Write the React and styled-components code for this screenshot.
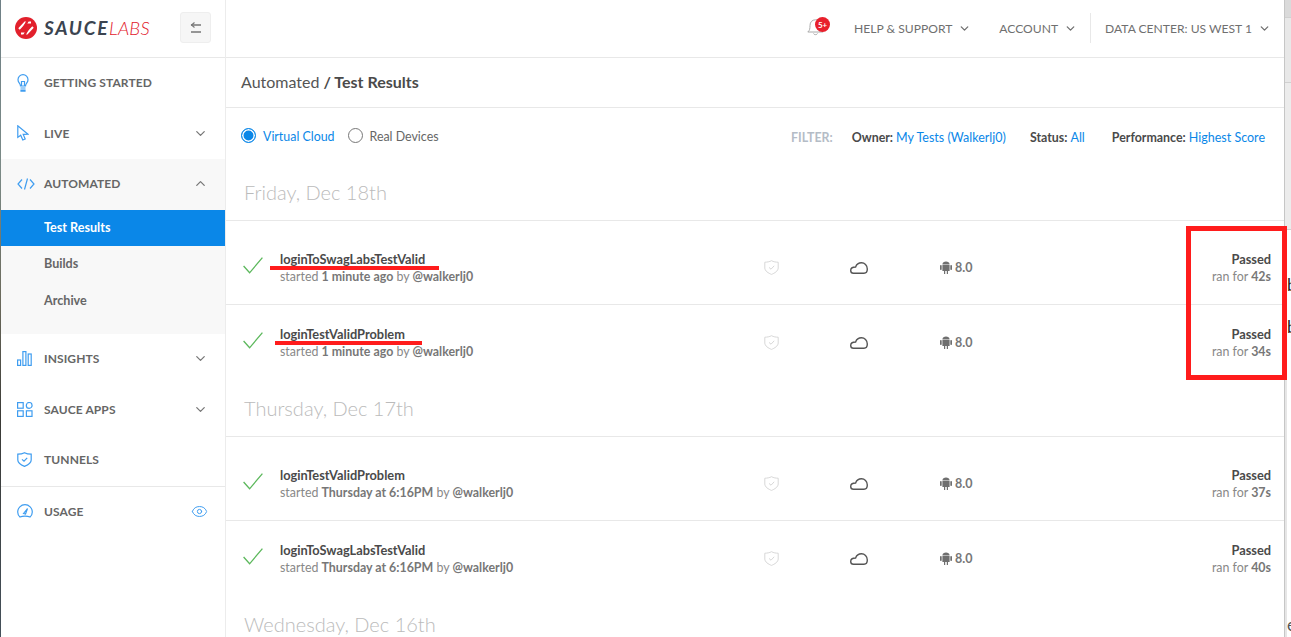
import React from 'react';
import styled, { createGlobalStyle } from 'styled-components';
import { ChevronDown, ChevronUp, Eye } from 'lucide-react';

const GlobalStyle = createGlobalStyle`
    html, body {
        margin: 0;
        padding: 0;
        background: #fff;
        overflow: hidden;
    }
    * {
        box-sizing: border-box;
    }
`;

const Page = styled.div`
    display: flex;
    width: 1291px;
    height: 637px;
    overflow: hidden;
    position: relative;
    font-family: Lato, 'Open Sans', sans-serif;
    color: #666;
`;

const LeftEdge = styled.div`
    width: 1px;
    flex: none;
    background: linear-gradient(#6f8086 0, #7b8a86 170px, #6b6a5c 300px, #3a3a36 420px, #44505a 637px);
`;

const Sidebar = styled.aside`
    width: 225px;
    flex: none;
    border-right: 1px solid #ececec;
    background: #fff;
`;

const LogoBar = styled.div`
    height: 58px;
    display: flex;
    align-items: center;
    justify-content: space-between;
    padding: 0 14px 2px 14px;
    border-bottom: 1px solid #e8e8e8;
`;

const Logo = styled.div`
    display: flex;
    align-items: center;
    gap: 7px;
    font-size: 19px;
    font-style: italic;
`;

const LogoStrong = styled.span`
    font-weight: 700;
    letter-spacing: 1.7px;
    color: #3b4450;
`;

const LogoLight = styled.span`
    font-weight: 300;
    font-size: 18.5px;
    letter-spacing: 0.2px;
    color: #e2202c;
    margin-left: -7px;
`;

const ToggleButton = styled.button`
    width: 31px;
    height: 31px;
    padding: 0;
    display: flex;
    align-items: center;
    justify-content: center;
    background: #f6f6f6;
    border: 1px solid #eeeeee;
    border-radius: 3px;
`;

const NavItem = styled.div`
    height: 50.5px;
    display: flex;
    align-items: center;
    padding: 0 17px 1px 16px;
    font-size: 12px;
    font-weight: 700;
    letter-spacing: 0.1px;
    color: #666;
`;

const NavIcon = styled.span`
    width: 27px;
    flex: none;
    display: flex;
    color: #3f9df0;
`;

const NavLabel = styled.span`
    flex: 1;
`;

const SubPanel = styled.div`
    background: #f8f8f8;
    height: 175px;
`;

const SubItem = styled.div`
    height: 36.5px;
    display: flex;
    align-items: center;
    padding: 0 0 1px 43px;
    font-size: 12.6px;
    font-weight: 700;
    color: ${p => (p.$active ? '#fff' : '#666')};
    background: ${p => (p.$active ? '#0a87e8' : 'transparent')};
`;

const SideDivider = styled.div`
    height: 1px;
    background: #e8e8e8;
`;

const Main = styled.main`
    flex: 1;
    min-width: 0;
    background: #fff;
`;

const TopBar = styled.div`
    height: 58px;
    display: flex;
    align-items: center;
    justify-content: flex-end;
    padding: 0 13px 1px 0;
    border-bottom: 1px solid #e8e8e8;
`;

const Bell = styled.div`
    position: relative;
    width: 22px;
    height: 22px;
    margin-right: 25px;
    color: #aaa;
`;

const BellBadge = styled.span`
    position: absolute;
    top: 0;
    left: 8px;
    width: 15px;
    height: 15px;
    border-radius: 50%;
    background: #e8202c;
    color: #fff;
    font-size: 8px;
    font-weight: 700;
    display: flex;
    align-items: center;
    justify-content: center;
`;

const TopLink = styled.div`
    display: flex;
    align-items: center;
    gap: 6px;
    font-size: 12.1px;
    color: #6f6f6f;
    margin-right: ${p => p.$gap || 0}px;
`;

const TopDivider = styled.div`
    width: 1px;
    height: 30px;
    background: #e8e8e8;
    margin-right: 14px;
`;

const Breadcrumb = styled.div`
    height: 50px;
    display: flex;
    align-items: center;
    gap: 4px;
    padding: 0 0 2px 15px;
    font-size: 16px;
    color: #555;
    border-bottom: 1px solid #e8e8e8;
`;

const BreadcrumbStrong = styled.strong`
    font-weight: 700;
    color: #4a4a4a;
`;

const Toolbar = styled.div`
    height: 56px;
    display: flex;
    align-items: center;
    justify-content: space-between;
    padding: 0 19px 1px 15px;
`;

const RadioGroup = styled.div`
    display: flex;
    align-items: center;
    gap: 13px;
`;

const Radio = styled.label`
    display: flex;
    align-items: center;
    gap: 7px;
    font-size: 12.4px;
    color: ${p => (p.$on ? '#0a87e8' : '#666')};
`;

const RadioText = styled.span`
    margin-top: 1px;
`;

const RadioDot = styled.span`
    width: 15px;
    height: 15px;
    border-radius: 50%;
    border: 1px solid ${p => (p.$on ? '#0a87e8' : '#777')};
    background: ${p => (p.$on ? '#0a87e8' : '#fff')};
    box-shadow: ${p => (p.$on ? 'inset 0 0 0 1.5px #fff' : 'none')};
`;

const Filters = styled.div`
    display: flex;
    align-items: center;
    padding-top: 4px;
    font-size: 12.4px;
    font-weight: 700;
    color: #4a4a4a;
`;

const FilterTitle = styled.span`
    color: #b4bcc6;
    margin-right: 19px;
`;

const FilterItem = styled.span`
    margin-right: ${p => p.$gap || 0}px;
`;

const FilterValue = styled.span`
    font-size: 12.5px;
    font-weight: 400;
    color: #0a87e8;
`;

const DayHeading = styled.h2`
    margin: 0;
    height: 56px;
    display: flex;
    align-items: center;
    padding-left: 18px;
    font-size: 20px;
    font-weight: 300;
    color: #bbb;
`;

const Row = styled.div`
    display: flex;
    align-items: center;
    height: ${p => (p.$first ? 84 : 76)}px;
    padding: ${p => (p.$first ? '10px' : '0')} 13px 0 17px;
    border-top: 1px solid #e8e8e8;
`;

const CheckMark = styled.svg`
    width: 20px;
    height: 17px;
    flex: none;
    margin: 0 17px 4px 0;
`;

const RowTitle = styled.div`
    width: 484px;
    flex: none;
`;

const TestName = styled.div`
    font-size: 12.8px;
    font-weight: 700;
    line-height: 17px;
    color: #4a4a4a;
`;

const Started = styled.div`
    font-size: 12.4px;
    line-height: 17px;
    color: #888;
`;

const Muted = styled.b`
    font-weight: 700;
    color: #777;
`;

const ShieldCol = styled.div`
    width: 86px;
    flex: none;
    display: flex;
`;

const CloudCol = styled.div`
    width: 90px;
    flex: none;
    display: flex;
`;

const PlatformCol = styled.div`
    display: flex;
    align-items: center;
    gap: 3px;
    font-size: 12.5px;
    font-weight: 700;
    color: #777;
`;

const Status = styled.div`
    margin-left: auto;
    text-align: right;
`;

const Passed = styled.div`
    font-size: 12.8px;
    font-weight: 700;
    line-height: 17px;
    color: #4a4a4a;
`;

const RightEdge = styled.div`
    width: 7px;
    flex: none;
    display: flex;
    flex-direction: column;
    overflow: hidden;
    background: #fff;
    border-left: 1px solid #c6c6c6;
`;

const EdgeBand = styled.div`
    flex: none;
    height: ${p => p.$height}px;
    background: ${p => p.$color};
    border-bottom: 1px solid #d0d0d0;
`;

const EdgeRest = styled.div`
    flex: 1;
    display: flex;
    flex-direction: column;
    border-left: 2px solid #e6e6e6;
    font-size: 17px;
    line-height: 20px;
    white-space: nowrap;
`;

const EdgeGlyph = styled.span`
    margin-top: ${p => p.$top}px;
    color: ${p => p.$color || '#222'};
`;

const RedBox = styled.div`
    position: absolute;
    left: 1186px;
    top: 226px;
    width: 101px;
    height: 154px;
    border: 5px solid #ff1c1c;
`;

const RedLine = styled.div`
    position: absolute;
    left: ${p => p.$left}px;
    top: ${p => p.$top}px;
    width: ${p => p.$width}px;
    height: 4px;
    background: #ff1c1c;
`;

const LogoMark = () => (
    <svg width="22" height="22" viewBox="0 0 22 22">
        <circle cx="11" cy="11" r="11" fill="#e2202c" />
        <path d="M4 12 L10 5.5 H16 M18 10 L12 16.5 H6" fill="none" stroke="#fff" strokeWidth="2" />
        <path d="M13 3 L9 10.5 H13.5 L9 19" fill="none" stroke="#e2202c" strokeWidth="2.4" />
    </svg>
);

const BulbIcon = () => (
    <svg width="12" height="18" viewBox="0 0 12 18" fill="none" stroke="currentColor" strokeWidth="1.2">
        <path d="M3.5 12 C3.5 9.5 1 8.8 1 5.7 A5 5 0 0 1 11 5.7 C11 8.8 8.5 9.5 8.5 12 Z" />
        <path d="M4.5 12 V7.5 H7.5 V12 M3.5 14 H8.5 M4 16 H8 V17.2 H4 Z" />
    </svg>
);

const CursorIcon = () => (
    <svg width="12" height="16" viewBox="0 0 12 16" fill="none" stroke="currentColor" strokeWidth="1.2">
        <path d="M.8 .8 V12.4 L3.7 10.2 L5.8 15 L8.2 14 L6.2 9.4 L11 9.2 Z" />
    </svg>
);

const CodeIcon = () => (
    <svg width="18" height="12" viewBox="0 0 18 12" fill="none" stroke="currentColor" strokeWidth="1.2">
        <path d="M5 1.5 L1 6 L5 10.5 M13 1.5 L17 6 L13 10.5 M10.5 .5 L7.5 11.5" />
    </svg>
);

const BarsIcon = () => (
    <svg width="15" height="15" viewBox="0 0 15 15" fill="none" stroke="currentColor" strokeWidth="1.2">
        <rect x=".6" y="9" width="3" height="5.4" />
        <rect x="5.9" y=".6" width="3" height="13.8" />
        <rect x="11.2" y="3" width="3" height="11.4" />
    </svg>
);

const AppsIcon = () => (
    <svg width="16" height="15" viewBox="0 0 16 15" fill="none" stroke="currentColor" strokeWidth="1.2">
        <rect x=".6" y=".6" width="5.6" height="5.6" />
        <circle cx="12.2" cy="3.4" r="2.9" />
        <rect x=".6" y="8.8" width="5.6" height="5.6" />
        <rect x="9.4" y="8.8" width="5.6" height="5.6" />
    </svg>
);

const ShieldIcon = ({ size = 15, color = 'currentColor', width = 1.2 }) => (
    <svg width={size} height={size} viewBox="0 0 15 15" fill="none" stroke={color} strokeWidth={width}>
        <path d="M.8 2.2 C3 2.2 5.5 1.8 7.5 .7 C9.5 1.8 12 2.2 14.2 2.2 V8 C14.2 11 10.5 13.2 7.5 14.4 C4.5 13.2 .8 11 .8 8 Z" />
        <path d="M5 7.4 L7 9.2 L10.2 5.8" />
    </svg>
);

const GaugeIcon = () => (
    <svg width="16" height="15" viewBox="0 0 16 15" fill="none" stroke="currentColor" strokeWidth="1.2">
        <path d="M3 13 C1.5 11.8 .7 10 .7 8 A7.3 7.3 0 0 1 15.3 8 C15.3 10 14.5 11.8 13 13 C10.5 11.8 5.5 11.8 3 13 Z" />
        <path d="M6.5 9.5 L10.5 4.5 L8.5 10 Z" />
    </svg>
);

const SliderIcon = () => (
    <svg width="12" height="11" viewBox="0 0 12 11" fill="none" stroke="#777" strokeWidth="1.3">
        <path d="M1 3 H11 M1 10 H11" />
        <path d="M4.5 .5 L1.5 3 L4.5 5.5" strokeWidth="1.1" />
    </svg>
);

const BellIcon = () => (
    <svg width="17" height="19" viewBox="0 0 17 19" fill="none" stroke="currentColor" strokeWidth="1">
        <path d="M.8 15 C2.8 13.5 3 11.5 3 8.5 C3 5 5.2 2.8 8.5 2.8 C11.8 2.8 14 5 14 8.5 C14 11.5 14.2 13.5 16.2 15 Z" />
        <path d="M6.5 16.5 C7 18 10 18 10.5 16.5" />
    </svg>
);

const CloudIcon = () => (
    <svg width="18" height="12" viewBox="0 0 18 12" fill="none" stroke="#555" strokeWidth="1.4">
        <path d="M3.5 11.2 H14 C16.4 11.2 17.3 9.4 17.3 7 C17.3 3 14.5 .8 11.5 .8 C8.5 .8 6.5 2.5 5.6 5 C2.6 5 .7 6.5 .7 8.4 C.7 10.2 2 11.2 3.5 11.2 Z" />
    </svg>
);

const AndroidIcon = () => (
    <svg width="12" height="13" viewBox="0 0 12 13" fill="#6f6f6f">
        <rect x="0" y="4" width="1.7" height="5" rx=".8" />
        <rect x="10.3" y="4" width="1.7" height="5" rx=".8" />
        <path d="M2.4 4 H9.6 V10 H8 V13 H6.8 V10 H5.2 V13 H4 V10 H2.4 Z" />
        <path d="M2.4 3.4 C2.6 1.6 4 .6 6 .6 C8 .6 9.4 1.6 9.6 3.4 Z" />
    </svg>
);

const days = [
    {
        label: 'Friday, Dec 18th',
        runs: [
            { name: 'loginToSwagLabsTestValid', when: '1 minute ago', time: '42s' },
            { name: 'loginTestValidProblem', when: '1 minute ago', time: '34s' },
        ],
    },
    {
        label: 'Thursday, Dec 17th',
        runs: [
            { name: 'loginTestValidProblem', when: 'Thursday at 6:16PM', time: '37s' },
            { name: 'loginToSwagLabsTestValid', when: 'Thursday at 6:16PM', time: '40s' },
        ],
    },
];

const TestRow = ({ run, first }) => (
    <Row $first={first}>
        <CheckMark viewBox="0 0 20 17" fill="none" stroke="#5cb85c" strokeWidth="1.3">
            <path d="M.6 9 L6.6 15.8 L19.4 .6" />
        </CheckMark>
        <RowTitle>
            <TestName>{run.name}</TestName>
            <Started>started <Muted>{run.when}</Muted> by <Muted>@walkerlj0</Muted></Started>
        </RowTitle>
        <ShieldCol><ShieldIcon size={15} color="#d8d8d8" width={1} /></ShieldCol>
        <CloudCol><CloudIcon /></CloudCol>
        <PlatformCol><AndroidIcon /> 8.0</PlatformCol>
        <Status>
            <Passed>Passed</Passed>
            <Started>ran for <Muted>{run.time}</Muted></Started>
        </Status>
    </Row>
);

const App = () => {
    return (
        <Page>
            <GlobalStyle />
            <LeftEdge />
            <Sidebar>
                <LogoBar>
                    <Logo>
                        <LogoMark />
                        <LogoStrong>SAUCE</LogoStrong>
                        <LogoLight>LABS</LogoLight>
                    </Logo>
                    <ToggleButton><SliderIcon /></ToggleButton>
                </LogoBar>
                <NavItem>
                    <NavIcon><BulbIcon /></NavIcon>
                    <NavLabel>GETTING STARTED</NavLabel>
                </NavItem>
                <NavItem>
                    <NavIcon><CursorIcon /></NavIcon>
                    <NavLabel>LIVE</NavLabel>
                    <ChevronDown size={15} color="#777" />
                </NavItem>
                <SubPanel>
                    <NavItem>
                        <NavIcon><CodeIcon /></NavIcon>
                        <NavLabel>AUTOMATED</NavLabel>
                        <ChevronUp size={15} color="#777" />
                    </NavItem>
                    <SubItem $active>Test Results</SubItem>
                    <SubItem>Builds</SubItem>
                    <SubItem>Archive</SubItem>
                </SubPanel>
                <NavItem>
                    <NavIcon><BarsIcon /></NavIcon>
                    <NavLabel>INSIGHTS</NavLabel>
                    <ChevronDown size={15} color="#777" />
                </NavItem>
                <NavItem>
                    <NavIcon><AppsIcon /></NavIcon>
                    <NavLabel>SAUCE APPS</NavLabel>
                    <ChevronDown size={15} color="#777" />
                </NavItem>
                <NavItem>
                    <NavIcon><ShieldIcon /></NavIcon>
                    <NavLabel>TUNNELS</NavLabel>
                </NavItem>
                <SideDivider />
                <NavItem>
                    <NavIcon><GaugeIcon /></NavIcon>
                    <NavLabel>USAGE</NavLabel>
                    <Eye size={17} color="#3f9df0" strokeWidth={1.4} />
                </NavItem>
            </Sidebar>
            <Main>
                <TopBar>
                    <Bell>
                        <BellIcon />
                        <BellBadge>5+</BellBadge>
                    </Bell>
                    <TopLink $gap={28}>HELP &amp; SUPPORT <ChevronDown size={13} strokeWidth={2.4} /></TopLink>
                    <TopLink $gap={13}>ACCOUNT <ChevronDown size={13} strokeWidth={2.4} /></TopLink>
                    <TopDivider />
                    <TopLink>DATA CENTER: US WEST 1 <ChevronDown size={13} strokeWidth={2.4} /></TopLink>
                </TopBar>
                <Breadcrumb>
                    Automated <BreadcrumbStrong>/ Test Results</BreadcrumbStrong>
                </Breadcrumb>
                <Toolbar>
                    <RadioGroup>
                        <Radio $on><RadioDot $on /><RadioText>Virtual Cloud</RadioText></Radio>
                        <Radio><RadioDot /><RadioText>Real Devices</RadioText></Radio>
                    </RadioGroup>
                    <Filters>
                        <FilterTitle>FILTER:</FilterTitle>
                        <FilterItem $gap={24}>Owner: <FilterValue>My Tests (Walkerlj0)</FilterValue></FilterItem>
                        <FilterItem $gap={27}>Status: <FilterValue>All</FilterValue></FilterItem>
                        <FilterItem>Performance: <FilterValue>Highest Score</FilterValue></FilterItem>
                    </Filters>
                </Toolbar>
                {days.map(day => (
                    <section key={day.label}>
                        <DayHeading>{day.label}</DayHeading>
                        {day.runs.map((run, i) => (
                            <TestRow key={run.name} run={run} first={i === 0} />
                        ))}
                    </section>
                ))}
                <DayHeading>Wednesday, Dec 16th</DayHeading>
            </Main>
            <RightEdge>
                <EdgeBand $height={18} $color="#dadada" />
                <EdgeBand $height={65} $color="#e8e8e8" />
                <EdgeBand $height={147} $color="#ececec" />
                <EdgeRest>
                    <EdgeGlyph $top={45}>b</EdgeGlyph>
                    <EdgeGlyph $top={22}>b</EdgeGlyph>
                    <EdgeGlyph $top={278} $color="#555">er</EdgeGlyph>
                </EdgeRest>
            </RightEdge>
            <RedBox />
            <RedLine $left={270} $top={266} $width={169} />
            <RedLine $left={275} $top={341} $width={147} />
        </Page>
    );
};

export default App;
